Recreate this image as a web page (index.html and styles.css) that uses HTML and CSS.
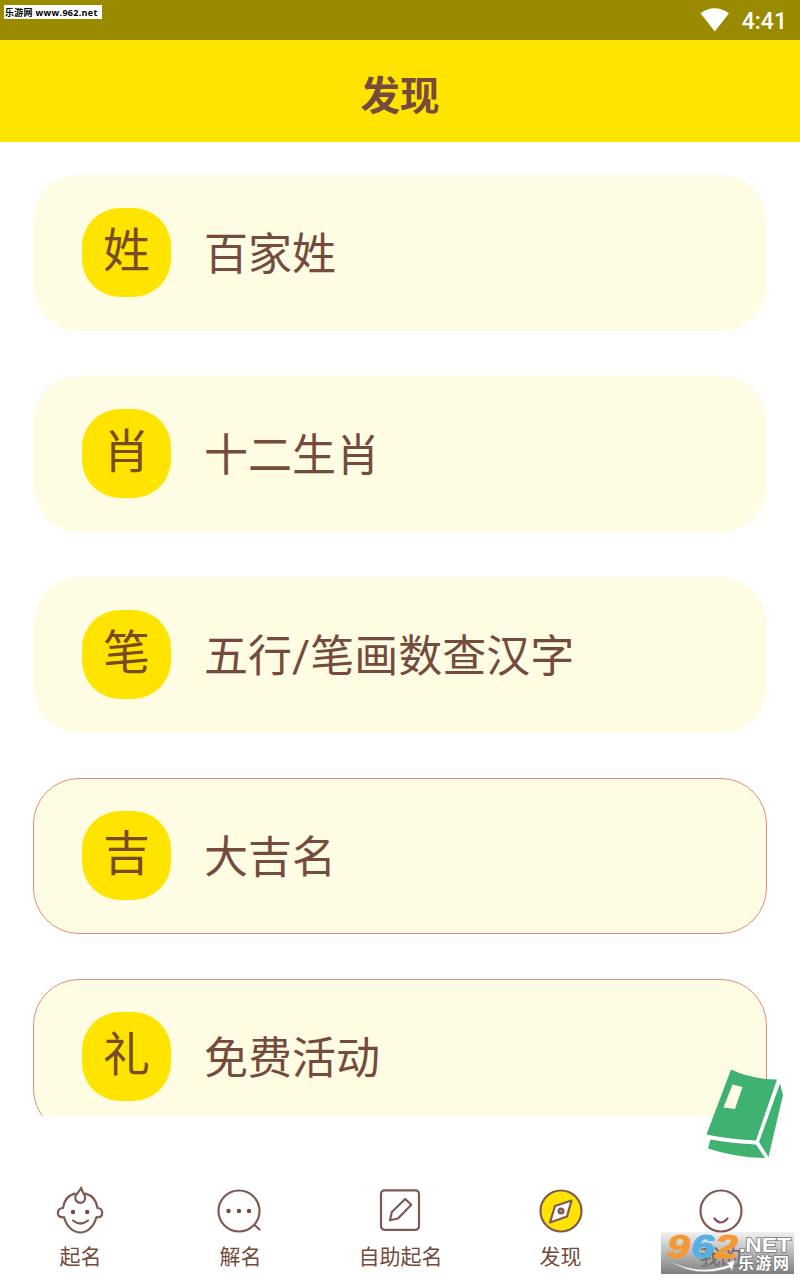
FILE: index.html
```
<!DOCTYPE html>
<html lang="zh-CN">
<head>
    <meta charset="utf-8">
    <title>发现</title>
    <link rel="stylesheet" href="styles.css">
</head>
<body>
    <div class="status-bar">
        <span class="site-tag">乐游网 www.962.net</span>
        <div class="status-right">
            <svg class="wifi" width="30" height="24" viewBox="0 0 30 24"><path d="M.5 5.2Q14.5-4.6 29 5.2L14.8 23.4Z" fill="#fff"/></svg>
            <span class="clock">4:41</span>
        </div>
    </div>
    <header class="title-bar"><h1>发现</h1></header>

    <main class="card-list">
        <a class="card"><span class="badge">姓</span><span class="card-title">百家姓</span></a>
        <a class="card"><span class="badge">肖</span><span class="card-title">十二生肖</span></a>
        <a class="card"><span class="badge">笔</span><span class="card-title">五行/笔画数查汉字</span></a>
        <a class="card outlined"><span class="badge">吉</span><span class="card-title">大吉名</span></a>
        <a class="card outlined"><span class="badge">礼</span><span class="card-title">免费活动</span></a>
    </main>

    <nav class="tab-bar">
        <a class="tab">
            <svg class="tab-icon" viewBox="0 0 48 48">
                <path d="M18.800 2.600C12 4.500 7.800 10 7 17C3.500 17 1.800 19.500 1.800 22C1.800 25 4.500 27 8 26C10.500 35.500 17 41.500 24.300 41.500S38 35.500 40.500 26C44 27 46.200 25 46.200 22C46.200 19.500 44.500 17 41.500 17C40.500 10 36.500 4.500 29.500 2.600"/>
                <path d="M25.200-3.500C24 1 19.500 2.500 19.300 6.500C19.200 9.800 21.500 11.800 24.300 11.800S29.200 9.800 29.200 6.500C29.200 3.500 25.500 1 25.200-3.500Z"/>
                <path d="M17 29.500Q24.500 35.500 32 29.500"/>
                <circle class="dot" cx="17" cy="21" r="2.200"/><circle class="dot" cx="31.200" cy="21" r="2.200"/>
            </svg>
            <span>起名</span>
        </a>
        <a class="tab">
            <svg class="tab-icon" viewBox="0 0 48 48">
                <circle cx="23" cy="20" r="20.500"/>
                <path d="M38.500 34L43.500 38.500"/>
                <circle class="dot" cx="12.500" cy="20" r="2.200"/><circle class="dot" cx="23" cy="20" r="2.200"/><circle class="dot" cx="33" cy="20" r="2.200"/>
            </svg>
            <span>解名</span>
        </a>
        <a class="tab">
            <svg class="tab-icon" viewBox="0 0 48 48">
                <rect x="5" y="-.7" width="38" height="39.500" rx="3.500"/>
                <path d="M29.200 8L35.300 13.800L22 27.500L14 29.300L15.800 21Z"/>
            </svg>
            <span>自助起名</span>
        </a>
        <a class="tab">
            <svg class="tab-icon" viewBox="0 0 48 48">
                <circle class="yellow" cx="25" cy="20" r="20.500"/>
                <path class="needle" d="M35.500 9.500L31 25.500L14 31.500L19 15Z"/>
                <circle class="hub" cx="25" cy="20" r="2.400"/>
            </svg>
            <span>发现</span>
        </a>
        <a class="tab">
            <svg class="tab-icon" viewBox="0 0 48 48">
                <circle cx="25" cy="20" r="20.500"/>
                <path d="M18.500 27.500Q24.500 35.500 31.500 27.500"/>
            </svg>
            <span>我的</span>
        </a>
    </nav>

    <!-- floating book button -->
    <svg class="book" width="80" height="92" viewBox="0 0 80 92">
        <path class="book-gap" d="M71 10.500L76 14L63 86L61 87L2 69V65L51 70Z"/>
        <path d="M26 0.500Q46 10 72 10.500L51 71.500Q26 70.500 1.500 65.500Z"/>
        <path d="M75 14.500L78 26L63.500 88L54 73Z"/>
        <path d="M5.500 70.500Q27 74.500 51 75.500L60 89Q30 88.500 3 79.500Z"/>
        <path class="book-label" d="M27.500 15.500L37.500 18L30 40L18.500 38.500Z"/>
    </svg>

    <svg class="watermark" width="139" height="43" viewBox="0 0 139 43">
        <defs>
            <linearGradient id="shade" x1="0" y1="0" x2="0" y2="1">
                <stop offset="0" stop-color="#777" stop-opacity=".1"/>
                <stop offset="1" stop-color="#777" stop-opacity=".95"/>
            </linearGradient>
        </defs>
        <rect width="133" height="42" fill="url(#shade)"/>
        <g class="wm-number">
            <text x="6" y="26" textLength="23" lengthAdjust="spacingAndGlyphs" fill="#f39a35" stroke="#f39a35">9</text>
            <text x="30" y="26" textLength="23" lengthAdjust="spacingAndGlyphs" fill="#55b0e5" stroke="#55b0e5">6</text>
            <text x="54" y="26" textLength="23" lengthAdjust="spacingAndGlyphs" fill="#f39a35" stroke="#f39a35">2</text>
        </g>
        <text class="wm-net" x="78" y="20" textLength="52" lengthAdjust="spacingAndGlyphs">.NET</text>
        <text class="wm-cn" x="77" y="37" textLength="51">乐游网</text>
        <path d="M7 28Q36 44 68 33L65 31L74 28L71 39L69 35.500Q34 47 7 28Z" fill="#fff" stroke="#999" stroke-width=".6"/>
    </svg>
</body>
</html>
```
FILE: styles.css
```
* {
    box-sizing: border-box;
}

body {
    display: flex;
    flex-direction: column;
    position: relative;
    height: 1280px;
    margin: 0;
    overflow: hidden;
    background-color: #fff;
    color: #754b3d;
    font-family: "Noto Sans CJK SC", sans-serif;
}

.status-bar {
    display: flex;
    justify-content: space-between;
    align-items: flex-start;
    height: 40px;
    padding: 5px 13px 0 4px;
    background-color: #998a00;
}

.site-tag {
    width: 98px;
    height: 14px;
    padding-left: 1px;
    background-color: #fff;
    color: #000;
    font: bold 9px/15px "Open Sans", "Noto Sans CJK SC", sans-serif;
    letter-spacing: 0.3px;
    white-space: nowrap;
}

.status-right {
    display: flex;
    gap: 12px;
    padding-top: 3px;
}

.clock {
    color: #fff;
    font: 500 23px/28px Roboto, sans-serif;
}

.title-bar {
    display: flex;
    align-items: center;
    justify-content: center;
    height: 102px;
    padding-top: 4px;
    background-color: #ffe400;
}

.title-bar h1 {
    margin: 0;
    font-size: 39.5px;
    font-weight: bold;
    line-height: 60px;
}

.card-list {
    display: flex;
    flex-direction: column;
    gap: 45px;
    height: 974px;
    padding: 33px 33px 0;
    overflow: hidden;
}

.card {
    display: flex;
    flex-shrink: 0;
    align-items: center;
    gap: 34px;
    height: 156px;
    padding: 0 0 1px 48px;
    border: 1px solid #fffce4;
    border-radius: 46px;
    background-color: #fffce4;
}

.outlined {
    border-color: #e28b80;
}

.badge {
    width: 89px;
    height: 89px;
    border-radius: 38px;
    background-color: #ffe400;
    color: #784c22;
    font: 47px/78px KaiTi, STKaiti, "Noto Sans CJK SC", sans-serif;
    text-align: center;
}

.card-title {
    margin-left: -1px;
    padding-top: 5px;
    font: 44px/64px Roboto, "Noto Sans CJK SC", sans-serif;
}

.tab-bar {
    display: flex;
    flex: 1;
    padding-top: 75px;
}

.tab {
    display: flex;
    flex: 1;
    flex-direction: column;
    align-items: center;
    font-size: 21px;
    line-height: 30px;
}

.tab-icon {
    width: 48px;
    height: 48px;
    margin-bottom: 1px;
    overflow: visible;
    fill: none;
    stroke: #805a50;
    stroke-width: 2.2;
    stroke-linecap: round;
    stroke-linejoin: round;
}

.tab span {
    padding-left: 1px;
}

.tab-icon .dot {
    fill: #754b3d;
    stroke: none;
}

.tab-icon .yellow {
    fill: #ffe400;
}

.tab-icon .needle {
    fill: #fff;
}

.tab-icon .hub {
    fill: #b79a58;
}

/* things that float over the page */
.book {
    position: absolute;
    left: 705px;
    top: 1069px;
    fill: #3fb272;
}

.book-gap {
    fill: #fff;
}

.book-label {
    fill: #fffce4;
}

.watermark {
    position: absolute;
    left: 661px;
    top: 1232px;
    overflow: visible;
}

.wm-number {
    font: italic bold 33px "Liberation Sans", sans-serif;
    stroke-width: 1;
}

.wm-net {
    font: bold 20px "Liberation Sans", sans-serif;
    fill: #fff;
    stroke: #777;
    stroke-width: 1.5;
    paint-order: stroke;
}

.wm-cn {
    font: bold 16px "Noto Sans CJK SC", sans-serif;
    fill: #fff;
    stroke: #777;
    stroke-width: 1.5;
    paint-order: stroke;
}
```
